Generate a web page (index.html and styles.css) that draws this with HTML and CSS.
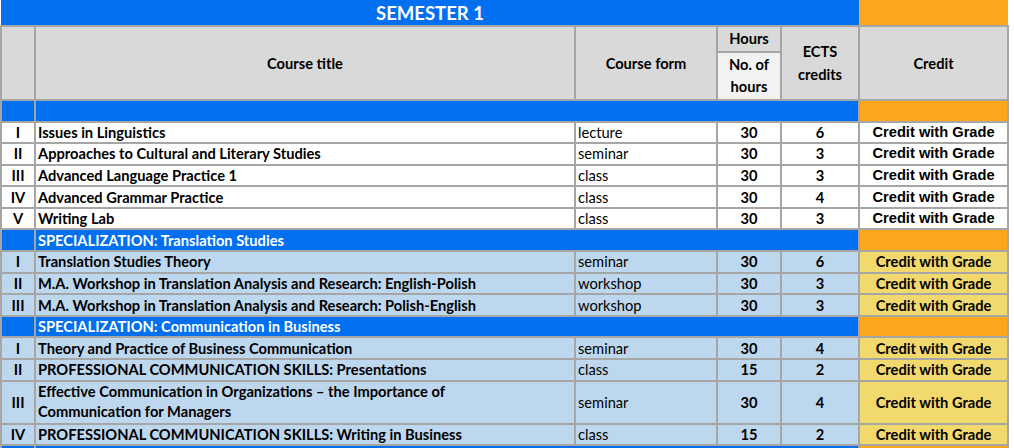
FILE: index.html
```html
<!DOCTYPE html>
<html lang="en">
<head>
<meta charset="utf-8">
<title>Semester 1</title>
<link rel="stylesheet" href="styles.css">
</head>
<body>
<table class="plan">
  <colgroup>
    <col class="c-no"><col class="c-title"><col class="c-form"><col class="c-hours"><col class="c-ects"><col class="c-credit">
  </colgroup>
  <tr class="r-sem">
    <th colspan="5" class="sem">SEMESTER 1</th>
    <th class="sem-orange"></th>
  </tr>
  <tr class="r-head1">
    <th rowspan="2" class="head"></th>
    <th rowspan="2" class="head">Course title</th>
    <th rowspan="2" class="head">Course form</th>
    <th class="head">Hours</th>
    <th rowspan="2" class="head ects">ECTS<br>credits</th>
    <th rowspan="2" class="head">Credit</th>
  </tr>
  <tr class="r-head2">
    <th class="head sub">No. of<br>hours</th>
  </tr>
  <tr class="band">
    <td class="blue"></td><td colspan="4" class="blue"></td><td class="orange"></td>
  </tr>

  <tr class="row">
    <td class="no">I</td><td class="title">Issues in Linguistics</td><td class="form">lecture</td><td class="num">30</td><td class="num">6</td><td class="credit arial">Credit with Grade</td>
  </tr>
  <tr class="row">
    <td class="no">II</td><td class="title">Approaches to Cultural and Literary Studies</td><td class="form">seminar</td><td class="num">30</td><td class="num">3</td><td class="credit arial">Credit with Grade</td>
  </tr>
  <tr class="row">
    <td class="no">III</td><td class="title">Advanced Language Practice 1</td><td class="form">class</td><td class="num">30</td><td class="num">3</td><td class="credit arial">Credit with Grade</td>
  </tr>
  <tr class="row">
    <td class="no">IV</td><td class="title">Advanced Grammar Practice</td><td class="form">class</td><td class="num">30</td><td class="num">4</td><td class="credit arial">Credit with Grade</td>
  </tr>
  <tr class="row">
    <td class="no">V</td><td class="title">Writing Lab</td><td class="form">class</td><td class="num">30</td><td class="num">3</td><td class="credit arial">Credit with Grade</td>
  </tr>

  <tr class="row band">
    <td class="blue"></td><td colspan="4" class="blue spec">SPECIALIZATION: Translation Studies</td><td class="orange"></td>
  </tr>
  <tr class="row tinted">
    <td class="no">I</td><td class="title">Translation Studies Theory</td><td class="form">seminar</td><td class="num">30</td><td class="num">6</td><td class="credit gold">Credit with Grade</td>
  </tr>
  <tr class="row tinted">
    <td class="no">II</td><td class="title">M.A. Workshop in Translation Analysis and Research: English-Polish</td><td class="form">workshop</td><td class="num">30</td><td class="num">3</td><td class="credit gold">Credit with Grade</td>
  </tr>
  <tr class="row tinted">
    <td class="no">III</td><td class="title">M.A. Workshop in Translation Analysis and Research: Polish-English</td><td class="form">workshop</td><td class="num">30</td><td class="num">3</td><td class="credit gold">Credit with Grade</td>
  </tr>

  <tr class="row band">
    <td class="blue"></td><td colspan="4" class="blue spec">SPECIALIZATION: Communication in Business</td><td class="orange"></td>
  </tr>
  <tr class="row tinted">
    <td class="no">I</td><td class="title">Theory and Practice of Business Communication</td><td class="form">seminar</td><td class="num">30</td><td class="num">4</td><td class="credit gold">Credit with Grade</td>
  </tr>
  <tr class="row tinted">
    <td class="no">II</td><td class="title">PROFESSIONAL COMMUNICATION SKILLS: Presentations</td><td class="form">class</td><td class="num">15</td><td class="num">2</td><td class="credit gold">Credit with Grade</td>
  </tr>
  <tr class="row2 tinted">
    <td class="no">III</td><td class="title wrap">Effective Communication in Organizations – the Importance of<br>Communication for Managers</td><td class="form">seminar</td><td class="num">30</td><td class="num">4</td><td class="credit gold">Credit with Grade</td>
  </tr>
  <tr class="row tinted">
    <td class="no">IV</td><td class="title">PROFESSIONAL COMMUNICATION SKILLS: Writing in Business</td><td class="form">class</td><td class="num">15</td><td class="num">2</td><td class="credit gold">Credit with Grade</td>
  </tr>
  <tr class="row band">
    <td class="blue"></td><td colspan="4" class="blue spec"></td><td class="orange"></td>
  </tr>
</table>
</body>
</html>
```

FILE: styles.css
```css
html, body {
  margin: 0;
  padding: 0;
  background: #ffffff;
}

body {
  font-family: Lato, "Liberation Sans", sans-serif;
  color: #000000;
}

.plan {
  border-collapse: collapse;
  table-layout: fixed;
  width: 1009px;
  font-size: 14.67px;
}

.c-no { width: 34px; }
.c-title { width: 540px; }
.c-form { width: 142px; }
.c-hours { width: 64px; }
.c-ects { width: 78px; }
.c-credit { width: 149px; }

.plan th,
.plan td {
  border: 2px solid #a6a6a6;
  padding: 0 2px;
  line-height: 17px;
  white-space: nowrap;
  overflow: hidden;
  vertical-align: middle;
}

.r-sem { height: 26px; }
.r-head1 { height: 25.5px; }
.r-head2 { height: 48.5px; }
.band { height: 21.5px; }
.row { height: 21.6px; }
.row2 { height: 43.2px; }

.plan .sem {
  border: none;
  background: #0070f0;
  color: #ffffff;
  font-size: 18.5px;
  font-weight: 700;
  text-align: center;
  line-height: 22px;
}

.plan .sem-orange {
  border: none;
  background: #fba71c;
}

.head {
  background: #d9d9d9;
  font-weight: 700;
  text-align: center;
}

.plan .head.sub {
  background: #f2f2f2;
  line-height: 22px;
}

.plan .head.ects {
  line-height: 23px;
}

.blue {
  background: #0070f0;
}

.orange {
  background: #fba71c;
}

.spec {
  color: #ffffff;
  font-weight: 700;
}

.no {
  text-align: center;
  font-weight: 700;
}

.title {
  font-weight: 700;
  padding-left: 3px;
}

.plan .wrap {
  line-height: 20.5px;
}

.form {
  padding-left: 3px;
}

.num {
  text-align: center;
  font-weight: 700;
}

.credit {
  text-align: center;
  font-weight: 700;
}

.arial {
  font-family: "Liberation Sans", Arial, sans-serif;
  font-size: 14.67px;
}

.tinted td {
  background: #bdd7ee;
}

.tinted td.gold {
  background: #f2d96e;
}
```
